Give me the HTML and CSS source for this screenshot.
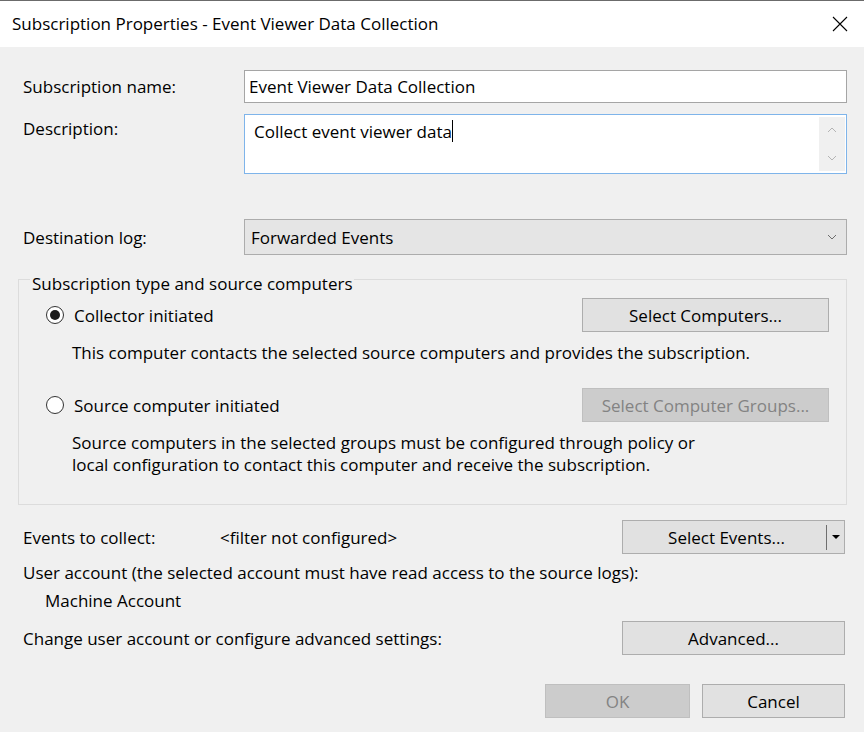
FILE: index.html
```html
<html>
<head>
<title>Subscription Properties - Event Viewer Data Collection</title>
<link rel="stylesheet" href="styles.css">
</head>
<body>
<div class="window">
	<div class="titlebar">
		<div class="title">Subscription Properties - Event Viewer Data Collection</div>
		<svg class="close" width="16" height="16" viewBox="0 0 16 16"><path d="M1 1 L15 15 M15 1 L1 15" stroke="#000" stroke-width="1.1" fill="none"/></svg>
	</div>
	<div class="content">
		<div class="field-row name-row">
			<div class="label">Subscription name:</div>
			<div class="textbox">Event Viewer Data Collection</div>
		</div>
		<div class="field-row desc-row">
			<div class="label desc-label">Description:</div>
			<div class="textarea">
				<div class="textarea-text">Collect event viewer data<span class="caret"></span></div>
				<div class="scrollbar">
					<svg width="10" height="6" viewBox="0 0 10 6"><path d="M1 5 L5 1 L9 5" stroke="#b4b4b4" fill="none"/></svg>
					<svg width="10" height="6" viewBox="0 0 10 6"><path d="M1 1 L5 5 L9 1" stroke="#b4b4b4" fill="none"/></svg>
				</div>
			</div>
		</div>
		<div class="field-row dest-row">
			<div class="label">Destination log:</div>
			<div class="combo">
				<span>Forwarded Events</span>
				<svg width="10" height="6" viewBox="0 0 10 6"><path d="M1 1 L5 5 L9 1" stroke="#6d6d6d" fill="none"/></svg>
			</div>
		</div>

		<fieldset class="group">
			<legend>Subscription type and source computers</legend>
			<div class="option-row first">
				<div class="radio checked"><span class="dot"></span></div>
				<div class="option-label">Collector initiated</div>
				<button class="button wide">Select Computers...</button>
			</div>
			<div class="option-desc">This computer contacts the selected source computers and provides the subscription.</div>
			<div class="option-row second">
				<div class="radio"></div>
				<div class="option-label">Source computer initiated</div>
				<button class="button wide disabled">Select Computer Groups...</button>
			</div>
			<div class="option-desc">Source computers in the selected groups must be configured through policy or<br>local configuration to contact this computer and receive the subscription.</div>
		</fieldset>

		<div class="action-row events-row">
			<div class="events-label">Events to collect:</div>
			<div class="events-value">&lt;filter not configured&gt;</div>
			<button class="button side split">
				<span class="split-main">Select Events...</span>
				<span class="split-sep"></span>
				<span class="split-arrow"><svg width="8" height="4" viewBox="0 0 8 4"><path d="M0 0 L8 0 L4 4 Z" fill="#000"/></svg></span>
			</button>
		</div>
		<div class="plain-line">User account (the selected account must have read access to the source logs):</div>
		<div class="plain-line indent">Machine Account</div>
		<div class="action-row advanced-row">
			<div class="events-label">Change user account or configure advanced settings:</div>
			<button class="button side">Advanced...</button>
		</div>
		<div class="footer">
			<button class="button footer-btn disabled">OK</button>
			<button class="button footer-btn">Cancel</button>
		</div>
	</div>
</div>
</body>
</html>
```

FILE: styles.css
```css
html, body {
	margin: 0;
	padding: 0;
	background-color: #f0f0f0;
}
.window {
	width: 864px;
	height: 732px;
	box-sizing: border-box;
	border-top: 1px solid #6b6b6b;
	background-color: #f0f0f0;
	font-family: 'Open Sans', sans-serif;
	font-size: 17px;
	color: #000;
	overflow: hidden;
}
.titlebar {
	height: 46px;
	background-color: #fff;
	display: flex;
	align-items: center;
	justify-content: space-between;
	padding-left: 12px;
	padding-right: 16px;
}
.title {
	font-size: 17px;
	padding-bottom: 1px;
}
.close {
	margin-top: -1px;
}
.content {
	padding: 0 17px 0 23px;
}

.field-row {
	display: grid;
	grid-template-columns: 221px 1fr;
	align-items: center;
}
.name-row {
	margin-top: 23px;
}
.desc-row {
	margin-top: 11px;
	align-items: start;
}
.dest-row {
	margin-top: 45px;
}
.desc-label {
	padding-top: 3px;
}
.textbox {
	height: 33px;
	box-sizing: border-box;
	border: 1px solid #a5a5a5;
	background-color: #fff;
	padding-left: 4px;
	line-height: 31px;
}
.textarea {
	height: 60px;
	box-sizing: border-box;
	border: 1px solid #7eb4ea;
	background-color: #fff;
	display: flex;
	justify-content: space-between;
}
.textarea-text {
	padding: 5px 0 0 9px;
	line-height: 23px;
}
.caret {
	display: inline-block;
	width: 1px;
	height: 22px;
	background-color: #000;
	vertical-align: top;
}
.scrollbar {
	width: 26px;
	margin: 2px 1px 2px 0;
	background-color: #f0f0f0;
	display: flex;
	flex-direction: column;
	align-items: center;
	justify-content: space-between;
	padding: 10px 0 10px 0;
	box-sizing: border-box;
}
.combo {
	height: 36px;
	box-sizing: border-box;
	border: 1px solid #acacac;
	background-color: #e5e5e5;
	display: flex;
	align-items: center;
	justify-content: space-between;
	padding: 0 9px 0 6px;
}

.group {
	margin: 19px 0 0 -5px;
	padding: 0 17px 0 27px;
	height: 231px;
	box-sizing: border-box;
	border: 1px solid #dcdcdc;
	min-width: 0;
}
.group legend {
	padding: 0 2px;
	margin-left: -16px;
	height: 10px;
	line-height: 20px;
}
.option-row {
	display: flex;
	align-items: center;
	height: 34px;
}
.option-row.first {
	margin-top: 14px;
}
.option-row.second {
	margin-top: 24px;
}
.radio {
	width: 18px;
	height: 18px;
	box-sizing: border-box;
	border: 1px solid #333;
	border-radius: 50%;
	background-color: #fff;
	display: flex;
	align-items: center;
	justify-content: center;
	margin-right: 10px;
}
.dot {
	width: 10px;
	height: 10px;
	border-radius: 50%;
	background-color: #1a1a1a;
}
.option-label {
	flex: 1;
}
.option-desc {
	padding-left: 26px;
	line-height: 22px;
	margin-top: 10px;
}

.button {
	font-family: 'Open Sans', sans-serif;
	font-size: 17px;
	color: #000;
	background-color: #e1e1e1;
	border: 1px solid #adadad;
	box-sizing: border-box;
	padding: 0;
	margin: 0;
}
.button.disabled {
	background-color: #cccccc;
	border-color: #bfbfbf;
	color: #838383;
}
.wide {
	width: 247px;
	height: 34px;
}
.action-row {
	display: flex;
	align-items: center;
	height: 34px;
	padding-right: 2px;
}
.events-row {
	margin-top: 15px;
}
.events-label {
	width: 197px;
	white-space: nowrap;
}
.events-value {
	flex: 1;
}
.advanced-row .events-label {
	flex: 1;
}
.side {
	width: 223px;
	height: 34px;
}
.split {
	display: flex;
	align-items: center;
}
.split-main {
	flex: 1;
	text-align: center;
	padding-left: 4px;
}
.split-sep {
	width: 1px;
	height: 25px;
	background-color: #6f6f6f;
}
.split-arrow {
	width: 17px;
	display: flex;
	justify-content: center;
}
.plain-line {
	line-height: 22px;
	margin-top: 8px;
}
.plain-line.indent {
	padding-left: 22px;
	margin-top: 6px;
}
.advanced-row {
	margin-top: 9px;
}
.footer {
	display: flex;
	justify-content: flex-end;
	gap: 12px;
	margin-top: 29px;
	padding-right: 2px;
}
.footer-btn {
	width: 145px;
	height: 34px;
}
.footer-btn + .footer-btn {
	width: 143px;
}
```
